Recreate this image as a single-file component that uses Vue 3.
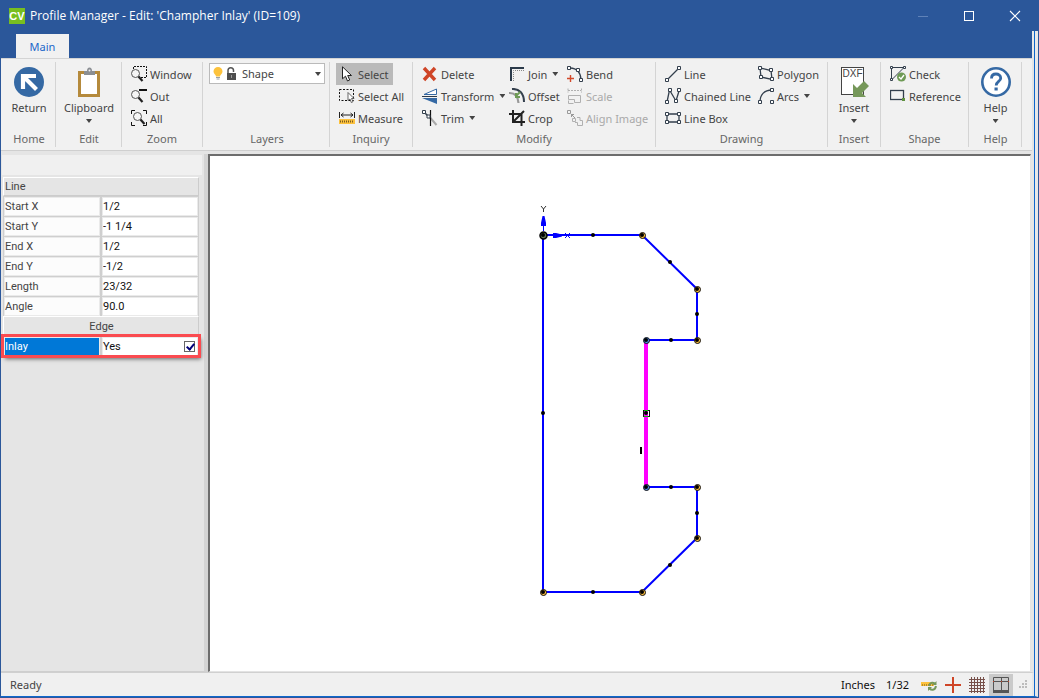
<script setup>
import { ref } from 'vue'

const rows = ref([
  { id: 'start-x', label: 'Start X', value: '1/2' },
  { id: 'start-y', label: 'Start Y', value: '-1 1/4' },
  { id: 'end-x', label: 'End X', value: '1/2' },
  { id: 'end-y', label: 'End Y', value: '-1/2' },
  { id: 'length', label: 'Length', value: '23/32' },
  { id: 'angle', label: 'Angle', value: '90.0' },
])
const inlay = ref(true)
const layer = ref('Shape')

// Profile outline, relative to the drawing origin
const nodes = [
  [99, 0], [154, 54], [154, 105], [154, 252], [154, 303], [99, 357], [0, 357],
]
const selectedNodes = [[103, 105], [103, 252]]
const midpoints = [
  [50, 0], [127, 27], [154, 79], [128, 105], [128, 252], [154, 278], [127, 330], [50, 357], [0, 178],
]
</script>

<template>
  <div class="window">
    <header class="titlebar">
      <svg class="logo" width="16" height="16" viewBox="0 0 16 16" aria-hidden="true">
        <rect width="16" height="16" fill="#78be20" />
        <text x="8" y="12" text-anchor="middle" class="logo-text">CV</text>
      </svg>
      <h1>Profile Manager - Edit: 'Champher Inlay' (ID=109)</h1>
      <div class="controls">
        <button type="button" aria-label="Minimize" disabled>
          <svg width="12" height="12"><path d="M1 6.5h10" stroke="#5f82b8" /></svg>
        </button>
        <button type="button" aria-label="Maximize">
          <svg width="12" height="12"><rect x="1.5" y="1.5" width="9" height="9" fill="none" stroke="#fff" /></svg>
        </button>
        <button type="button" aria-label="Close">
          <svg width="12" height="12"><path d="M1 1l10 10M11 1L1 11" stroke="#fff" stroke-width="1.1" /></svg>
        </button>
      </div>
    </header>

    <div class="frame">
      <div class="client">
        <nav class="tabs"><button type="button" class="tab">Main</button></nav>

        <div class="ribbon">
          <section class="group home">
            <div class="body">
              <button type="button" class="big">
                <svg width="30" height="30" viewBox="0 0 30 30">
                  <circle cx="15" cy="15" r="15" fill="#3569a4" />
                  <path d="M9 22V9H22M10 10l12.500 12.500" fill="none" stroke="#fff" stroke-width="4.200" />
                </svg>
                <span>Return</span>
              </button>
            </div>
            <h2>Home</h2>
          </section>

          <section class="group edit">
            <div class="body">
              <button type="button" class="big">
                <svg width="30" height="30" viewBox="0 0 30 30">
                  <rect x="5.500" y="5.500" width="19" height="23" fill="#fff" stroke="#b58a3c" stroke-width="3" />
                  <path d="M10 8V4h3a2.500 3.500 0 0 1 5 0h3v4z" fill="#8b8f94" />
                  <circle cx="15.500" cy="3.500" r="1" fill="#f1f1f1" />
                </svg>
                <span>Clipboard</span><i class="arrow"></i>
              </button>
            </div>
            <h2>Edit</h2>
          </section>

          <section class="group zoom">
            <div class="body">
              <button type="button" class="small">
                <svg width="16" height="16" viewBox="0 0 16 16">
                  <path d="M3 .5h12.500v11H10M2.500 1v2" fill="none" stroke="#111" stroke-dasharray="2 1" />
                  <circle cx="4.500" cy="7.500" r="4" fill="#f5f5f5" stroke="#555" />
                  <path d="M7.500 10.500l4 4.500" stroke="#222" stroke-width="2.200" />
                </svg>Window
              </button>
              <button type="button" class="small">
                <svg width="16" height="16" viewBox="0 0 16 16">
                  <path d="M8 2h8" stroke="#111" stroke-width="2" />
                  <circle cx="4.500" cy="6.500" r="4" fill="#f5f5f5" stroke="#555" />
                  <path d="M7.500 9.500l4 4.500" stroke="#222" stroke-width="2.200" />
                </svg>Out
              </button>
              <button type="button" class="small">
                <svg width="16" height="16" viewBox="0 0 16 16">
                  <path d="M.5 4V.5H4M12 .5h3.500V4M15.500 12v3.500H12M4 15.500H.5V12" fill="none" stroke="#111" />
                  <circle cx="6.500" cy="6.500" r="4" fill="#f5f5f5" stroke="#555" />
                  <path d="M9.500 9.500l4 4.500" stroke="#222" stroke-width="2.200" />
                </svg>All
              </button>
            </div>
            <h2>Zoom</h2>
          </section>

          <section class="group layers">
            <div class="body">
              <div class="combo">
                <select v-model="layer" aria-label="Layer">
                  <option>Shape</option>
                </select>
                <svg class="combo-icons" width="24" height="14" viewBox="0 0 24 14" aria-hidden="true">
                  <path d="M5 0a4.500 4.500 0 0 1 4.500 4.500C9.500 7 7 7.500 7 9.500H3C3 7.500.5 7 .5 4.500A4.500 4.500 0 0 1 5 0z" fill="#fcc23c" />
                  <path d="M3 10.500h4M3.500 12h3" stroke="#9aa0a6" />
                  <path d="M15 7V3.500a2.500 2.500 0 0 1 5.500 0V5" fill="none" stroke="#555" stroke-width="1.500" />
                  <rect x="14" y="6" width="9" height="7" fill="#4d4d4d" />
                  <path d="M18.500 8v3" stroke="#999" />
                </svg>
                <i class="arrow combo-arrow"></i>
              </div>
            </div>
            <h2>Layers</h2>
          </section>

          <section class="group inquiry">
            <div class="body">
              <button type="button" class="small active" aria-pressed="true">
                <svg width="16" height="16" viewBox="0 0 16 16">
                  <path d="M3.500.8v12l3-2.600 2 4.800 2.200-1-2-4.500h3.800z" fill="#fff" stroke="#222" />
                </svg>Select
              </button>
              <button type="button" class="small">
                <svg width="16" height="16" viewBox="0 0 16 16">
                  <path d="M.5 1.500h14v11H.5z" fill="none" stroke="#111" stroke-dasharray="2 1.500" />
                  <path d="M9 4.500v8l2-1.500 1.300 3.500 1.700-.8-1.500-3.200H15z" fill="#fff" stroke="#444" stroke-width=".8" />
                </svg>Select All
              </button>
              <button type="button" class="small">
                <svg width="16" height="16" viewBox="0 0 16 16">
                  <path d="M.5 2v6M15.500 2v6M2 5h12M4.500 3L2 5l2.500 2M11.500 3L14 5l-2.500 2" fill="none" stroke="#222" />
                  <rect y="9" width="16" height="5" fill="#fdc23e" />
                  <path d="M1 11.500h14" stroke="#7a5c20" stroke-width="2" stroke-dasharray="1 1" />
                </svg>Measure
              </button>
            </div>
            <h2>Inquiry</h2>
          </section>

          <section class="group modify">
            <div class="body">
              <button type="button" class="small">
                <svg width="16" height="16" viewBox="0 0 16 16">
                  <path d="M2 2l11 12M13 2L2 14" stroke="#cf4527" stroke-width="3.400" />
                </svg>Delete
              </button>
              <button type="button" class="small">
                <svg width="16" height="16" viewBox="0 0 16 16">
                  <path d="M2 6.500L14.500 1v5.500z" fill="#fff" stroke="#3569a4" />
                  <path d="M0 8.500h15" stroke="#2b3a4a" />
                  <path d="M0 10h15v6z" fill="#3569a4" />
                </svg>Transform<i class="arrow"></i>
              </button>
              <button type="button" class="small">
                <svg width="16" height="16" viewBox="0 0 16 16">
                  <path d="M2 2l6 6" stroke="#333f4d" stroke-width="1.500" /><path d="M8.500 8l6 7" stroke="#aaa" stroke-width="2" />
                  <path d="M8.500 0v16" stroke="#111" stroke-width="1.200" />
                  <path d="M.5.5h3v3h-3zM5 5h3v3H5z" fill="#fff" stroke="#333f4d" />
                </svg>Trim<i class="arrow"></i>
              </button>
              <button type="button" class="small">
                <svg width="16" height="16" viewBox="0 0 16 16">
                  <path d="M2 15V2H15" fill="none" stroke="#2b3a4a" stroke-width="2" />
                  <path d="M4.500 15V4.500H15" fill="none" stroke="#888" stroke-dasharray="1 1" />
                </svg>Join<i class="arrow"></i>
              </button>
              <button type="button" class="small">
                <svg width="16" height="16" viewBox="0 0 16 16">
                  <path d="M3 1c7-.5 12 4 12 13" fill="none" stroke="#333f4d" stroke-width="2" />
                  <path d="M0 5c6-.3 9 3 9.500 10" fill="none" stroke="#999" stroke-width="2.200" />
                  <path d="M7 8l4-4M7 5v4h4" fill="none" stroke="#6e9a55" stroke-width="2" />
                </svg>Offset
              </button>
              <button type="button" class="small">
                <svg width="16" height="16" viewBox="0 0 16 16">
                  <path d="M0 4h12.500v12M4 0v12h12M4 12L15 1" fill="none" stroke="#222" stroke-width="2" />
                </svg>Crop
              </button>
              <button type="button" class="small">
                <svg width="16" height="16" viewBox="0 0 16 16">
                  <path d="M3 2c7 0 11 5 11 12" fill="none" stroke="#333f4d" stroke-width="1.300" />
                  <path d="M.5.500h3v3h-3zM9.500 2.500h3v3h-3zM12.500 12.500h3v3h-3z" fill="#fff" stroke="#333f4d" />
                  <path d="M0 12.500h7M3.500 9v7" stroke="#d2492a" stroke-width="1.400" />
                </svg>Bend
              </button>
              <button type="button" class="small" disabled>
                <svg width="16" height="16" viewBox="0 0 16 16" fill="none" stroke="#b0b0b0">
                  <path d="M1 .5v4M14.500 .5v4M1 2.500h13" stroke-dasharray="2 1" />
                  <path d="M1.500 7.500h12v7h-6v-3h-6z" /><path d="M1.500 12.500v3h5" />
                </svg>Scale
              </button>
              <button type="button" class="small" disabled>
                <svg width="16" height="16" viewBox="0 0 16 16" fill="none" stroke="#b0b0b0">
                  <path d="M.5.5h3v3h-3zM4 4l4 4M4.500 7V4.500H7" stroke="#999" />
                  <path d="M5.500 8.500h3v3h-3zM10 7.500h3v3h2.500v5h-5v-3H8" />
                </svg>Align Image
              </button>
            </div>
            <h2>Modify</h2>
          </section>

          <section class="group drawing">
            <div class="body">
              <button type="button" class="small">
                <svg class="shape-icon" width="16" height="16" viewBox="0 0 16 16">
                  <path d="M2 14L14 2" /><path class="knob" d="M.5 12.500h3v3h-3zM12.500.5h3v3h-3z" />
                </svg>Line
              </button>
              <button type="button" class="small">
                <svg class="shape-icon" width="16" height="16" viewBox="0 0 16 16">
                  <path d="M2 14L4.500 2L11 13L14 3" />
                  <path class="knob" d="M.5 12.500h3v3h-3zM3.500.5h3v3h-3zM9.500 11.500h3v3h-3zM12.500.5h3v3h-3z" />
                </svg>Chained Line
              </button>
              <button type="button" class="small">
                <svg class="shape-icon" width="16" height="16" viewBox="0 0 16 16">
                  <path d="M2 4h12v8H2z" />
                  <path class="knob" d="M.5 2.500h3v3h-3zM12.500 2.500h3v3h-3zM.5 10.500h3v3h-3zM12.500 10.500h3v3h-3z" />
                </svg>Line Box
              </button>
              <button type="button" class="small">
                <svg class="shape-icon" width="16" height="16" viewBox="0 0 16 16">
                  <path d="M2 2L13 4.500L14 13.500L3 11z" />
                  <path class="knob" d="M.5.5h3v3h-3zM11.500 2.500h3v3h-3zM12.500 11.500h3v3h-3zM1.500 9.500h3v3h-3z" />
                </svg>Polygon
              </button>
              <button type="button" class="small">
                <svg class="shape-icon" width="16" height="16" viewBox="0 0 16 16">
                  <path d="M2 14C2 7 6 2 14 2" />
                  <path class="knob" d="M.5 12.500h3v3h-3zM12.500.5h3v3h-3zM12.500 12.500h3v3h-3z" />
                </svg>Arcs<i class="arrow"></i>
              </button>
            </div>
            <h2>Drawing</h2>
          </section>

          <section class="group insert">
            <div class="body">
              <button type="button" class="big">
                <svg width="30" height="30" viewBox="0 0 30 30">
                  <rect x="2.500" y=".5" width="22" height="27" fill="#fff" stroke="#444" />
                  <text x="13.500" y="10" text-anchor="middle" class="dxf">DXF</text>
                  <path d="M14 17l4 4 7-7 5 5-7 7 4 4H14z" fill="#76985a" />
                </svg>
                <span>Insert</span><i class="arrow"></i>
              </button>
            </div>
            <h2>Insert</h2>
          </section>

          <section class="group shape">
            <div class="body">
              <button type="button" class="small">
                <svg class="shape-icon" width="16" height="16" viewBox="0 0 16 16">
                  <path d="M1.500 14V1.500H14L1.500 14" stroke-width="1" />
                  <path class="knob" d="M.5.500h2v2h-2zM13.500.5h2v2h-2zM.5 12.500h2v2h-2z" />
                  <circle cx="11.500" cy="11" r="4.500" fill="#6e9a55" stroke="none" />
                  <path class="tick" d="M9 11l2 2 3-4" />
                </svg>Check
              </button>
              <button type="button" class="small">
                <svg class="shape-icon" width="16" height="16" viewBox="0 0 16 16">
                  <rect x=".5" y="2.500" width="13" height="9" /><rect x="12" y="10" width="3" height="3" fill="#5f9140" stroke="none" />
                </svg>Reference
              </button>
            </div>
            <h2>Shape</h2>
          </section>

          <section class="group help">
            <div class="body">
              <button type="button" class="big">
                <svg width="30" height="30" viewBox="0 0 30 30">
                  <circle cx="15" cy="15" r="13.700" fill="#fff" stroke="#3569a4" stroke-width="2.600" />
                  <path d="M10.500 11.500c0-3 2-4.500 4.500-4.500s4.700 1.500 4.700 4.200c0 3.300-4.500 3.300-4.500 7.300" fill="none" stroke="#3569a4" stroke-width="2.800" />
                  <rect x="13.500" y="20.500" width="3.200" height="3" fill="#3569a4" />
                </svg>
                <span>Help</span><i class="arrow"></i>
              </button>
            </div>
            <h2>Help</h2>
          </section>
        </div>

        <main class="workspace">
          <aside class="properties">
            <div class="strip"></div>
            <table>
              <thead><tr><th colspan="2" scope="colgroup">Line</th></tr></thead>
              <tbody>
                <tr v-for="row in rows" :key="row.id">
                  <td><label :for="row.id">{{ row.label }}</label></td>
                  <td><input :id="row.id" v-model="row.value" type="text" /></td>
                </tr>
                <tr><th colspan="2" scope="colgroup" class="centered">Edge</th></tr>
                <tr class="current">
                  <td><label for="inlay">Inlay</label></td>
                  <td><span class="check"><span>{{ inlay ? 'Yes' : 'No' }}</span><input id="inlay" v-model="inlay" type="checkbox" /></span></td>
                </tr>
              </tbody>
            </table>
          </aside>

          <div class="canvas">
            <svg class="drawing-area" role="img" aria-label="Profile drawing">
              <g transform="translate(333 79)">
                <path d="M0 357V0H99L154 54V105H103M103 252H154V303L99 357H0" fill="none" stroke="#0000ff" stroke-width="2" />
                <path d="M103 105V252" stroke="#f0f" stroke-width="4" />
                <path d="M.5-4V-10" stroke="#0000ff" /><path d="M-2-9v-3l1.500-7h2L3-12v3z" fill="#0000ff" />
                <path d="M10-2v5h3l6-1.500v-2L13-2z" fill="#0000ff" />
                <path d="M22-2l5 5M27-2l-5 5" stroke="#0000ff" /><path d="M-2-29l2.500 3 2.500-3M.5-26v3" fill="none" stroke="#333" />
                <g v-for="(p, i) in nodes" :key="'n' + i" :transform="`translate(${p[0]} ${p[1]})`">
                  <circle cx=".5" cy=".5" r="3" fill="#ffbe3c" stroke="#111" /><circle r="2" />
                </g>
                <g v-for="(p, i) in selectedNodes" :key="'s' + i" :transform="`translate(${p[0]} ${p[1]})`">
                  <circle cx=".5" cy=".5" r="3" fill="#4c8df0" stroke="#111" /><circle r="2" />
                </g>
                <circle v-for="(p, i) in midpoints" :key="'m' + i" :cx="p[0]" :cy="p[1]" r="2" />
                <circle cx=".5" cy=".5" r="3.500" fill="#5d7050" stroke="#000" stroke-width="1.500" /><circle r="2" />
                <rect x="100.500" y="175.500" width="6" height="6" fill="none" stroke="#111" />
                <path d="M101 175.500h4M101 181.500h4" stroke="#00c800" /><circle cx="103" cy="178" r="2" />
                <path d="M98 212v7" stroke="#000" stroke-width="2" />
              </g>
            </svg>
          </div>
        </main>

        <footer class="statusbar">
          <span class="ready">Ready</span>
          <span class="units">Inches</span>
          <span class="precision">1/32</span>
          <button type="button" aria-label="Convert units">
            <svg width="16" height="16" viewBox="0 0 16 16">
              <rect y="5" width="13" height="4" fill="#fdc23e" /><path d="M1 8h11" stroke="#9b7a26" stroke-width="1.500" stroke-dasharray="1 1" />
              <path d="M8 9c1-4 5-4 6-2M15 9c-1 5-5 4-6.500 2.500" fill="none" stroke="#76985a" stroke-width="2" /><path d="M15.500 4v4h-4zM7 14v-4h4z" fill="#76985a" />
            </svg>
          </button>
          <button type="button" aria-label="Crosshair">
            <svg width="16" height="16"><path d="M0 8h16M8 0v16" stroke="#cf4527" stroke-width="2" /></svg>
          </button>
          <button type="button" aria-label="Grid">
            <svg width="16" height="16" viewBox="0 0 16 16"><path d="M2.500 0v16M5.500 0v16M8.500 0v16M11.500 0v16M14.500 0v16M0 2.500h16M0 5.500h16M0 8.500h16M0 11.500h16M0 14.500h16" stroke="#77504a" /></svg>
          </button>
          <button type="button" class="pressed" aria-label="Frame view" aria-pressed="true">
            <svg width="16" height="16" viewBox="0 0 16 16"><path d="M.5.5h15v13H.5zM1 4.500h14M8.500 1v12" fill="none" stroke="#555" /><rect y="13" width="16" height="3" fill="#555" /><path d="M0 4.500h1M8 4.500h1M15 4.500h1" stroke="#cf4527" /></svg>
          </button>
          <svg class="grip" width="9" height="9" aria-hidden="true"><path d="M6 1h2M3 4h2M6 4h2M0 7h2M3 7h2M6 7h2" stroke="#bcbcbc" stroke-width="2" /></svg>
        </footer>
      </div>
    </div>
  </div>
</template>

<style>
html, body, #app { height: 100%; margin: 0; }
</style>

<style scoped>
* { box-sizing: border-box; }
.window {
  height: 100%;
  min-height: 560px;
  display: flex;
  flex-direction: column;
  background: #2b579a;
  font: 11px "Noto Sans", "Open Sans", sans-serif;
  color: #444;
  overflow: hidden;
}
button { font: inherit; color: inherit; border: 0; padding: 0; margin: 0; background: none; white-space: nowrap; }
h1, h2 { margin: 0; font: inherit; }
.titlebar { height: 31px; flex: none; display: flex; align-items: center; padding: 0 1px 0 9px; color: #fff; }
.titlebar h1 { margin-left: 5px; flex: 1; white-space: nowrap; font: 12px "Open Sans", "Noto Sans", sans-serif; }
.logo-text { font: bold 11px "Liberation Sans", sans-serif; fill: #fff; }
.controls { display: flex; }
.controls button { width: 46px; height: 30px; }
.controls svg { display: block; margin: auto; }
.frame {
  flex: 1;
  min-height: 0;
  display: flex;
  margin: 0 1px 1px;
  border-right: 3px solid #e8e8e8;
  border-bottom: 1px solid #0f66cc;
}
.client { flex: 1; min-width: 0; display: flex; flex-direction: column; background: #e5e5e5; border-right: 1px solid #0f66cc; }
.tabs { height: 27px; flex: none; display: flex; align-items: flex-end; padding-left: 15px; background: #2b579a; border-right: 2px solid #e8e8e8; }
.tab { width: 53px; height: 24px; background: #f1f1f1; color: #1b66c9; }
.ribbon { flex: none; display: flex; height: 93px; margin-right: 2px; padding: 3px 0; background: #f1f1f1; border-top: 1px solid #d4d4d4; border-bottom: 1px solid #cfcfcf; }
.group { display: flex; flex-direction: column; flex: none; padding: 1px 6px 0; border-right: 1px solid #d4d4d4; }
.home { width: 55px; padding: 1px 0 0 2px; }
.edit { width: 66px; padding: 1px 0 0 1px; }
.zoom { width: 81px; }
.layers { width: 127px; padding-right: 4px; }
.inquiry { width: 83px; }
.modify { width: 243px; }
.drawing { width: 172px; }
.insert { width: 53px; }
.shape { width: 88px; }
.help { width: 53px; padding: 1px 0 0 1px; }
.group h2 { height: 18px; line-height: 20px; text-align: center; color: #666; }
.body { flex: none; height: 66px; display: grid; grid-template-rows: repeat(3, 22px); grid-auto-flow: column; justify-content: start; }
.home .body, .edit .body, .insert .body, .help .body { display: flex; justify-content: center; }
.layers .body { display: block; }
.modify .body { grid-template-columns: 87px 58px 86px; }
.drawing .body { grid-template-columns: 93px 70px; }
.big { display: flex; flex-direction: column; align-items: center; padding-top: 4px; }
.big svg { flex: none; }
.big span { line-height: 22px; }
.big .arrow { margin: 0; }
.small { height: 22px; padding: 0 3px; display: flex; align-items: center; justify-self: start; }
.small svg { margin-right: 3px; flex: none; }
.small:disabled { color: #a9a9a9; }
.active { background: #bababa; padding-right: 4px; }
.arrow { flex: none; width: 6px; height: 4px; margin-left: 5px; background: #444; clip-path: polygon(0 0, 100% 0, 50% 100%); }
.combo { position: relative; }
.combo select { appearance: none; display: block; width: 100%; height: 21px; padding: 0 16px 0 32px; border: 1px solid #bababa; border-radius: 0; background: #fff; color: #444; font: inherit; }
.combo-icons { position: absolute; left: 4px; top: 4px; pointer-events: none; }
.combo-arrow { position: absolute; right: 4px; top: 9px; pointer-events: none; }
.shape-icon { fill: none; stroke: #333f4d; stroke-width: 1.3; }
.knob { fill: #fff; stroke-width: 1; }
.tick { stroke: #fff; }
.dxf { font: 10px "Liberation Sans", sans-serif; fill: #444; }

.workspace { flex: 1; min-height: 0; display: flex; padding-top: 3px; }
.properties { width: 207px; flex: none; border-right: 4px solid #d4d4d4; border-bottom: 1px solid #cfcfcf; font: 11px Roboto, "Liberation Sans", sans-serif; }
.strip { height: 20px; margin: 1px 2px 2px 1px; background: #f0f0f0; }
table { width: 196px; margin-left: 2px; border-collapse: separate; border-spacing: 0; table-layout: fixed; }
th, td { height: 20px; padding: 0; font-weight: normal; text-align: left; }
th { padding-left: 1px; border: 1px solid #fff; border-right-color: #ccc; border-bottom-color: #ccc; height: 19px; }
.centered { text-align: center; height: 20px; border-bottom: 0; }
td { border: 1px solid #cfcfcf; border-width: 1px 1px 0 1px; background: #fff; box-shadow: inset 0 0 0 1px #eaeaea; }
td:first-child { background: #fcfcfc; }
td label { display: block; padding-left: 1px; }
td input[type="text"] { display: block; width: 100%; height: 17px; border: 0; padding: 0 0 0 1px; background: none; font: inherit; color: #111; }
.current { outline: 3px solid #fa4b50; outline-offset: -1px; box-shadow: 2px 3px 4px #666; }
.current td:first-child { background: #0078d7; color: #fff; }
.check { display: flex; align-items: center; justify-content: space-between; padding: 0 3px 0 1px; color: #111; }
.check input { appearance: none; position: relative; width: 11px; height: 11px; margin: 0; border: 1px solid #666; background: #fff; }
.check input:checked::after { content: ""; position: absolute; left: 3px; top: 0; width: 3px; height: 6px; border: solid #00007a; border-width: 0 2px 2px 0; transform: rotate(40deg); }
.canvas { flex: 1; min-width: 0; margin-right: 3px; border: solid; border-width: 2px 1px 1px 2px; border-color: #6d6d6d #e3e3e3 #e3e3e3 #6d6d6d; background: #fff; }
.drawing-area { display: block; width: 100%; height: 100%; overflow: hidden; }
.statusbar { flex: none; height: 24px; display: flex; align-items: center; padding: 0 4px 0 9px; background: #f0f0f0; border-top: 1px solid #d0d0d0; border-right: 2px solid #e8e8e8; }
.ready { flex: 1; }
.units, .precision { color: #111; margin-right: 11px; }
.statusbar button { width: 24px; height: 22px; display: flex; align-items: center; justify-content: center; }
.precision { margin-right: 8px; }
.statusbar .pressed { background: #cacaca; }
.grip { margin-left: 6px; }
</style>
